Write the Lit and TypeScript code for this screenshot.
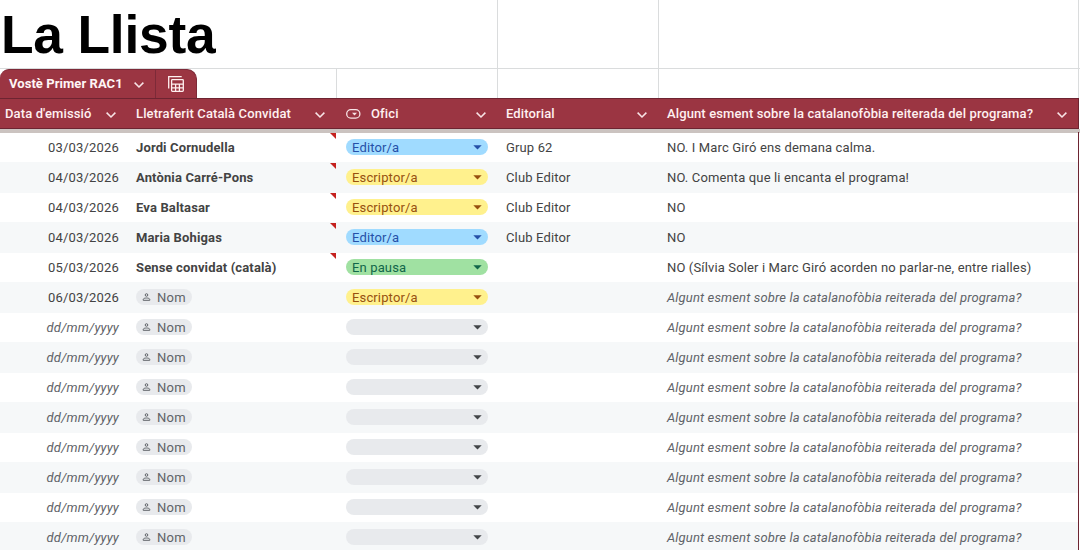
import { LitElement, html, css, svg, nothing } from "lit";
import { customElement } from "lit/decorators.js";
import { classMap } from "lit/directives/class-map.js";

type Entry = {
  date?: string;
  guest?: string;
  role?: "Editor/a" | "Escriptor/a" | "En pausa";
  publisher?: string;
  mention?: string;
};

const QUESTION = "Algunt esment sobre la catalanofòbia reiterada del programa?";

const ENTRIES: Entry[] = [
  { date: "03/03/2026", guest: "Jordi Cornudella", role: "Editor/a", publisher: "Grup 62", mention: "NO. I Marc Giró ens demana calma." },
  { date: "04/03/2026", guest: "Antònia Carré-Pons", role: "Escriptor/a", publisher: "Club Editor", mention: "NO. Comenta que li encanta el programa!" },
  { date: "04/03/2026", guest: "Eva Baltasar", role: "Escriptor/a", publisher: "Club Editor", mention: "NO" },
  { date: "04/03/2026", guest: "Maria Bohigas", role: "Editor/a", publisher: "Club Editor", mention: "NO" },
  { date: "05/03/2026", guest: "Sense convidat (català)", role: "En pausa", mention: "NO (Sílvia Soler i Marc Giró acorden no parlar-ne, entre rialles)" },
  { date: "06/03/2026", role: "Escriptor/a" },
  ...Array.from({ length: 8 }, () => ({})),
];

const chevron = html`<svg class="chevron" width="12" height="8" viewBox="0 0 12 8">
  ${svg`<path d="M1.6 1.6 6 6l4.4-4.4" fill="none" stroke="#f8e4e6" stroke-width="1.5"/>`}
</svg>`;

@customElement("app-root")
export class AppRoot extends LitElement {
  static styles = css`
    :host {
      display: block;
      width: 1080px;
      height: 550px;
      overflow: hidden;
      background: #fff;
      color: #434343;
      font: 13px/30px Roboto, sans-serif;
    }
    * { box-sizing: border-box; }
    svg { display: block; flex: none; }
    .grid {
      display: grid;
      grid-template-columns: 127px 210px 160px 161px 421px;
    }
    .title-row {
      display: grid;
      grid-template-columns: 498px 161px 420px;
      height: 69px;
      border-bottom: 1px solid #dadcdd;
    }
    .title-row > *, .tab-row > * { border-right: 1px solid #dadcdd; }
    .title {
      margin: 0;
      padding: 4px 0 0 1px;
      color: #000;
      font: bold 53.33px/61px "Liberation Sans", Arial, sans-serif;
      letter-spacing: -0.2px;
      white-space: nowrap;
    }
    .tab-row {
      display: grid;
      grid-template-columns: 337px 161px 161px 420px;
      height: 29px;
    }
    .tab {
      display: flex;
      width: 197px;
      height: 29px;
      color: #fff5f5;
      background: #9b3542;
      border: 1px solid #7d2a38;
      border-width: 1px 1px 0 0;
      border-radius: 9px 10px 0 0;
      font-weight: 700;
      letter-spacing: 0.06px;
    }
    .tab-name {
      display: flex;
      align-items: center;
      justify-content: space-between;
      width: 156px;
      padding: 0 10px 0 9px;
      border-right: 1px solid #7d2a38;
      line-height: 28px;
      white-space: nowrap;
    }
    .tab-name .chevron { margin-top: 2px; }
    .tab-icon { padding: 6px 0 0 12px; }
    .head {
      width: 1079px;
      height: 31px;
      background: #9b3542;
      border: 1px solid #6d2431;
      border-left: 0;
      color: #fff0f0;
      font-weight: 500;
      letter-spacing: 0.12px;
    }
    .head-cell {
      display: flex;
      align-items: center;
      min-width: 0;
      padding: 0 10px 0 9px;
      line-height: 29px;
      white-space: nowrap;
    }
    .head-cell:first-child { padding-left: 5px; }
    .head-cell:nth-child(2), .head-cell:last-child { padding-right: 11px; }
    .head-cell .chevron { margin: 3px 0 0 auto; }
    .kind { margin-right: 10px; }
    .freeze { height: 4px; background: #cbc3c0; }
    .body { width: 1079px; border-right: 1px solid #6d2431; margin-top: -1px; }
    .row { height: 30px; letter-spacing: 0.14px; line-height: 32px; }
    .row:first-child { height: 30px; }
    .row.alt { background: #f6f8f9; box-shadow: 0 1px #f6f8f9; }
    .cell { position: relative; min-width: 0; padding-left: 9px; white-space: nowrap; }
    .date { padding: 0 8px 0 0; text-align: right; letter-spacing: 0.18px; }
    .name { font-weight: 700; }
    .hint { font-style: italic; color: #5f6368; }
    .note {
      position: absolute;
      top: 1px;
      right: 1px;
      width: 6px;
      height: 6px;
      background: #c5221f;
      clip-path: polygon(0 0, 100% 0, 100% 100%);
    }
    .person {
      display: flex;
      align-items: center;
      width: 56px;
      height: 16px;
      margin-top: 7px;
      padding-left: 6px;
      gap: 6px;
      border-radius: 8px;
      background: #e8eaed;
      color: #5f6368;
      font-weight: 400;
      line-height: 16px;
      letter-spacing: 0.3px;
    }
    .role {
      display: flex;
      align-items: center;
      justify-content: space-between;
      width: 142px;
      height: 16px;
      margin-top: 7px;
      padding: 0 6px;
      border-radius: 8px;
      background: #e8eaed;
      color: #434649;
      line-height: 16px;
      letter-spacing: 0.14px;
    }
    .person span, .role span { padding-top: 2px; }
    .role.editor { background: #a0dbff; color: #2550a8; }
    .role.writer { background: #fff18d; color: #975010; }
    .role.pause { background: #a0e1a2; color: #12664a; }
  `;

  private headCell(label: string, kind = false) {
    return html`<div class="head-cell">
      ${kind
        ? html`<svg class="kind" width="15" height="10" viewBox="0 0 15 10">
            <rect x=".7" y=".7" width="13.2" height="8.4" rx="4.2" fill="none" stroke="#f8e4e6" stroke-width="1.3"/>
            <path d="M6 3.8h5L8.5 6.4z" fill="#f8e4e6"/>
          </svg>`
        : nothing}
      <span>${label}</span>${chevron}
    </div>`;
  }

  private row(e: Entry, i: number) {
    const role = {
      role: true,
      editor: e.role === "Editor/a",
      writer: e.role === "Escriptor/a",
      pause: e.role === "En pausa",
    };
    return html`<div class=${classMap({ grid: true, row: true, alt: i % 2 === 1 })}>
      <div class=${classMap({ cell: true, date: true, hint: !e.date })}>${e.date ?? "dd/mm/yyyy"}</div>
      <div class="cell name">
        ${e.guest
          ? html`${e.guest}<i class="note"></i>`
          : html`<div class="person">
              <svg width="9" height="8" viewBox="0 0 9 8" fill="none" stroke="#5f6368">
                <circle cx="4.5" cy="2" r="1.3"/>
                <path d="M1.2 7.3V6.6C1.2 5.4 3 5 4.5 5s3.3.4 3.3 1.6v.7z"/>
              </svg><span>Nom</span>
            </div>`}
      </div>
      <div class="cell">
        <div class=${classMap(role)}>
          <span>${e.role ?? ""}</span>
          <svg width="9" height="5" viewBox="0 0 9 5"><path d="M.3.2h8.4L4.5 4.6z" fill="currentColor"/></svg>
        </div>
      </div>
      <div class="cell">${e.publisher ?? ""}</div>
      <div class=${classMap({ cell: true, hint: !e.mention })}>${e.mention ?? QUESTION}</div>
    </div>`;
  }

  render() {
    return html`
      <div class="title-row"><h1 class="title">La Llista</h1><div></div><div></div></div>
      <div class="tab-row">
        <div>
          <div class="tab">
            <div class="tab-name"><span>Vostè Primer RAC1</span>${chevron}</div>
            <div class="tab-icon">
              <svg width="16" height="16" viewBox="0 0 16 16" fill="none" stroke="#fff0f0" stroke-width="1.3">
                <path d="M.7 12.5V.7h13"/>
                <rect x="3.6" y="3.6" width="11.7" height="11.7" rx=".8"/>
                <path d="M3.6 8.2h11.7M3.6 11.8h11.7M7.6 8.2v7.1M11.4 8.2v7.1"/>
              </svg>
            </div>
          </div>
        </div>
        <div></div><div></div><div></div>
      </div>
      <div class="grid head">
        ${this.headCell("Data d'emissió")}
        ${this.headCell("Lletraferit Català Convidat")}
        ${this.headCell("Ofici", true)}
        ${this.headCell("Editorial")}
        ${this.headCell(QUESTION)}
      </div>
      <div class="freeze"></div>
      <div class="body">${ENTRIES.map((e, i) => this.row(e, i))}</div>
    `;
  }
}
